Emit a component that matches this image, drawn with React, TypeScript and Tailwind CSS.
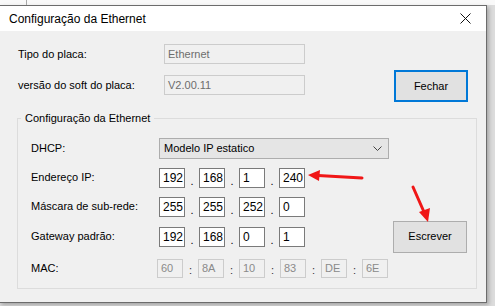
import React from "react";

const font = { fontFamily: '"Liberation Sans", Arial, sans-serif' };

function IpBox({ value }: { value: string }) {
  return (
    <div className="w-[26px] h-[20px] bg-white border border-[#7a7a7a] pl-[3px] leading-[18px] text-[12px] text-black">
      {value}
    </div>
  );
}

function MacBox({ value }: { value: string }) {
  return (
    <div className="w-[26px] h-[19px] bg-[#f0f0f0] border border-[#cccccc] pl-[3px] leading-[17px] text-[#8a8a8a]">
      {value}
    </div>
  );
}

function IpRow({ label, values }: { label: string; values: string[] }) {
  return (
    <div className="flex items-center h-[20px]">
      <div className="w-[128px]">{label}</div>
      {values.map((v, i) => (
        <div key={i} className="flex items-center">
          {i > 0 && <div className="w-[14px] text-center leading-none pt-[8px]">.</div>}
          <IpBox value={v} />
        </div>
      ))}
    </div>
  );
}

export default function App() {
  const mac = ["60", "8A", "10", "83", "DE", "6E"];

  return (
    <div className="relative w-[495px] h-[306px] overflow-hidden bg-[#dcdcdc] text-[11px] text-black" style={font}>
      {/* window behind */}
      <div className="h-[5px] bg-[#f9f9f9] flex">
        <div className="ml-[26px] w-px bg-[#a8a8a8]" />
      </div>

      <div className="ml-[-1px] w-[488px] h-[298px] border border-[#6c6c6c] bg-[#f0f0f0] shadow-[2px_2px_4px_rgba(0,0,0,0.25)] flex flex-col">
        {/* title bar */}
        <div className="h-[25px] bg-white flex items-center justify-between pl-[9px] pr-[15px]">
          <span className="text-[12px]">Configuração da Ethernet</span>
          <svg width="11" height="11" viewBox="0 0 11 11">
            <path d="M0.5 0.5 L10.5 10.5 M10.5 0.5 L0.5 10.5" stroke="#111" strokeWidth="1" />
          </svg>
        </div>

        <div className="flex-1 pl-[18px] pt-[13px]">
          <div className="flex">
            <div className="flex flex-col gap-[11px]">
              <div className="flex items-center h-[20px]">
                <div className="w-[146px]">Tipo do placa:</div>
                <div className="w-[141px] h-[20px] border border-[#cccccc] pl-[3px] leading-[18px] text-[#6d6d6d]">
                  Ethernet
                </div>
              </div>
              <div className="flex items-center h-[20px]">
                <div className="w-[146px]">versão do soft do placa:</div>
                <div className="w-[141px] h-[20px] border border-[#cccccc] pl-[3px] leading-[18px] text-[#6d6d6d]">
                  V2.00.11
                </div>
              </div>
            </div>
            <button className="ml-[89px] mt-[26px] w-[74px] h-[32px] border-2 border-[#0078d7] bg-[#e1e1e1]">
              Fechar
            </button>
          </div>

          <fieldset className="mt-[8px] ml-[-1px] w-[460px] h-[179px] border border-[#dcdcdc] pt-[12px]">
            <legend className="ml-[3px] px-[4px]">Configuração da Ethernet</legend>
            <div className="flex flex-col pl-[13px]">
              <div className="flex items-center h-[20px]">
                <div className="w-[128px]">DHCP:</div>
                <div className="w-[230px] h-[21px] border border-[#adadad] bg-[#e5e5e5] flex items-center justify-between pl-[4px] pr-[6px]">
                  <span>Modelo IP estatico</span>
                  <svg width="9" height="6" viewBox="0 0 9 6">
                    <path d="M0.5 0.5 L4.5 4.5 L8.5 0.5" fill="none" stroke="#444" strokeWidth="1" />
                  </svg>
                </div>
              </div>
              <div className="mt-[9px]">
                <IpRow label="Endereço IP:" values={["192", "168", "1", "240"]} />
              </div>
              <div className="mt-[9px]">
                <IpRow label="Máscara de sub-rede:" values={["255", "255", "252", "0"]} />
              </div>
              <div className="mt-[4px] flex items-center">
                <IpRow label="Gateway padrão:" values={["192", "168", "0", "1"]} />
                <button className="ml-[88px] w-[74px] h-[32px] border border-[#adadad] bg-[#e1e1e1]">
                  Escrever
                </button>
              </div>
              <div className="mt-[6px] flex items-center h-[19px]">
                <div className="w-[126px]">MAC:</div>
                {mac.map((v, i) => (
                  <div key={i} className="flex items-center">
                    {i > 0 && <div className="w-[15px] text-center text-[#333] pt-[4px]">:</div>}
                    <MacBox value={v} />
                  </div>
                ))}
              </div>
            </div>
          </fieldset>
        </div>
      </div>

      {/* annotation arrows */}
      <svg className="absolute left-0 top-0 pointer-events-none" width="495" height="306">
        <line x1="362" y1="178" x2="318" y2="175.5" stroke="#f01616" strokeWidth="3" strokeLinecap="round" />
        <polygon points="308,175 320,170 319,181" fill="#f01616" />
        <line x1="413" y1="187" x2="424" y2="212" stroke="#f01616" strokeWidth="3" strokeLinecap="round" />
        <polygon points="428,222 419,212 430,208" fill="#f01616" />
      </svg>
    </div>
  );
}
